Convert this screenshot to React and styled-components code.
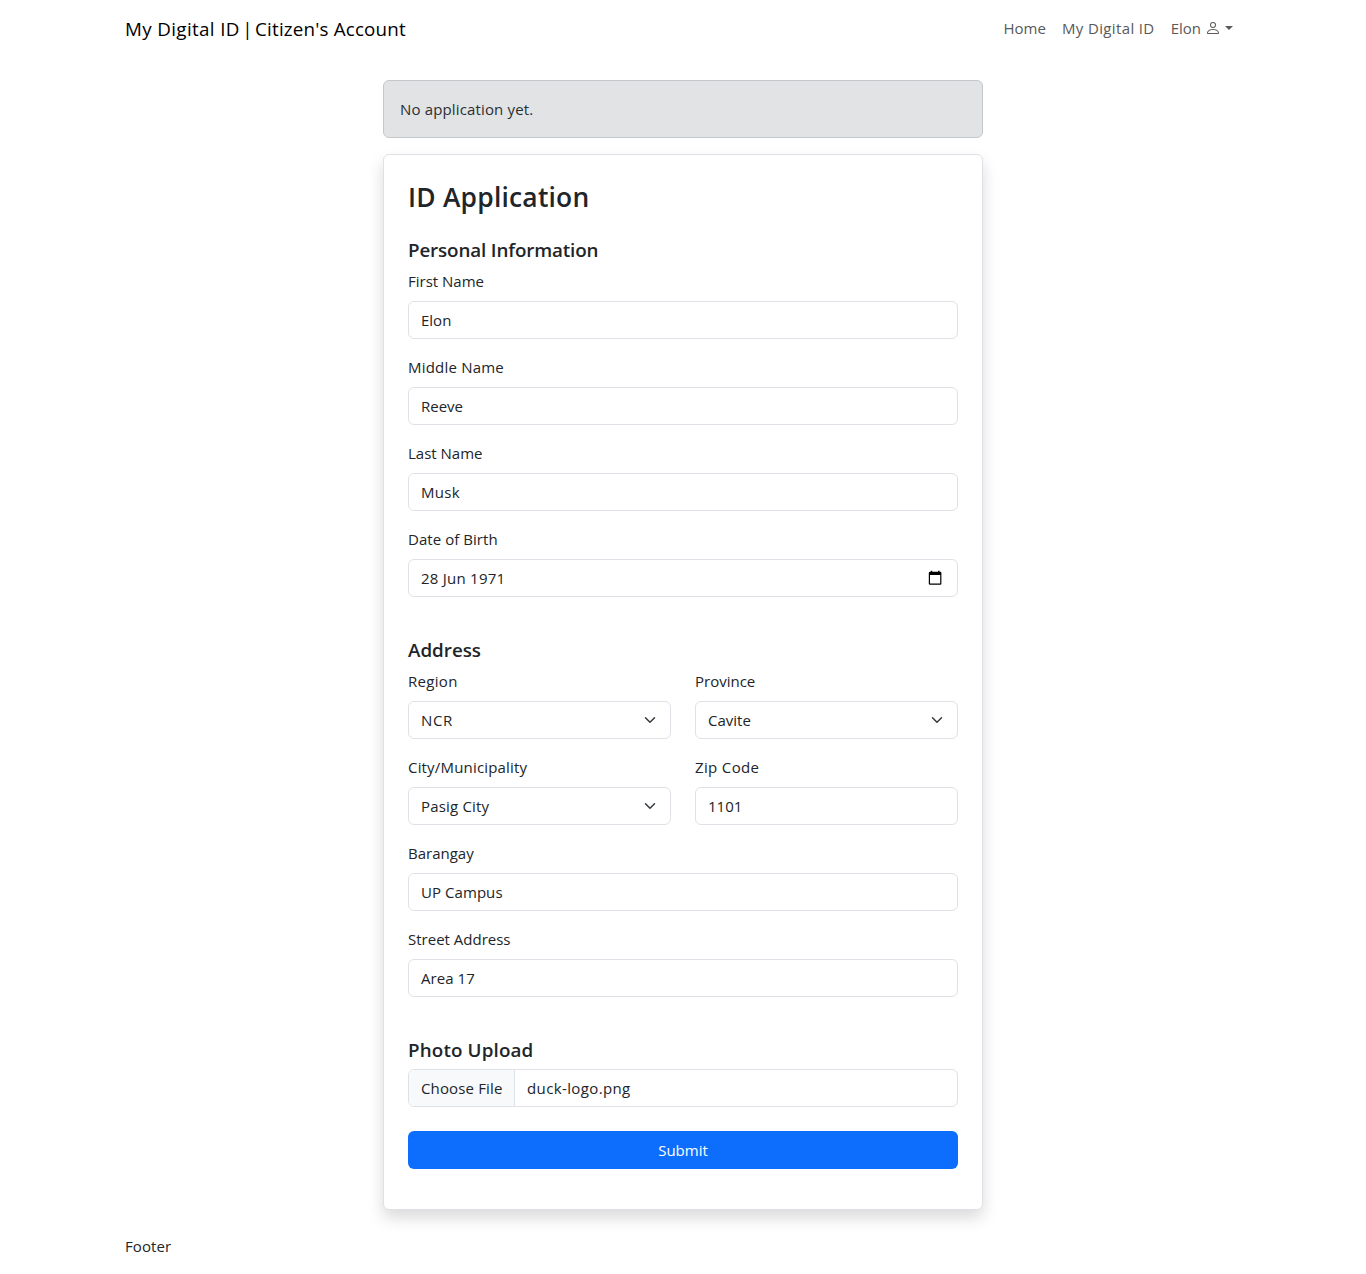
import React from "react";
import styled, { createGlobalStyle } from "styled-components";

const GlobalStyle = createGlobalStyle`
  *, *::before, *::after { box-sizing: border-box; }
  body {
    margin: 0;
    background: #fff;
    color: #212529;
    font-family: "Segoe UI", "Open Sans", "Noto Sans", sans-serif;
    font-size: 15px;
    line-height: 24px;
  }
`;

const Container = styled.div`
  width: 1140px;
  margin: 0 auto;
  padding: 0 12px;
`;

const Navbar = styled(Container).attrs({ as: "nav" })`
  height: 56px;
  display: flex;
  align-items: center;
  justify-content: space-between;
`;

const Brand = styled.a`
  color: #000;
  font-size: 18.8px;
  line-height: 30px;
  padding-top: 2px;
  word-spacing: -2.4px;
`;

const BrandPart = styled.span`
  word-spacing: 0;
  letter-spacing: ${(p) => p.$track || 0}px;
`;

const NavList = styled.div`
  display: flex;
`;

const NavLink = styled.a`
  display: flex;
  align-items: center;
  padding: 8px;
  color: #595959;
  letter-spacing: ${(p) => p.$track || 0}px;
`;

const PersonIcon = styled.svg`
  width: 16px;
  height: 16px;
  margin: 0 4px 0 4px;
`;

const Caret = styled.span`
  border-top: 4.8px solid #595959;
  border-left: 4.8px solid transparent;
  border-right: 4.8px solid transparent;
`;

const Main = styled.main`
  width: 600px;
  margin: 24px auto 0;
`;

const Alert = styled.div`
  height: 58px;
  padding: 16px;
  margin-bottom: 16px;
  border: 1px solid #c4c8cb;
  border-radius: 6px;
  background: #e2e3e5;
  color: #2b2f32;
  letter-spacing: ${(p) => p.$track || 0}px;
`;

const Card = styled.form`
  padding: 24px 24px 40px;
  border: 1px solid #dee2e6;
  border-radius: 6px;
  background: #fff;
  box-shadow: 0 8px 16px rgba(0, 0, 0, 0.15);
`;

const Title = styled.h3`
  margin: 0 0 22px;
  padding-top: 2px;
  font-size: 26.4px;
  line-height: 33.6px;
  font-weight: 600;
  letter-spacing: ${(p) => p.$track || 0}px;
`;

const Section = styled.section`
  margin-bottom: 40px;
  &:last-of-type { margin-bottom: 24px; }
`;

const Heading = styled.h5`
  margin: 0 0 7px;
  padding-top: 1px;
  font-size: 18.8px;
  line-height: 24px;
  font-weight: 600;
  letter-spacing: ${(p) => p.$track || 0}px;
`;

const Fields = styled.div`
  display: grid;
  grid-template-columns: 1fr 1fr;
  gap: 16px 24px;
`;

const Field = styled.div`
  grid-column: ${(p) => (p.$half ? "auto" : "1 / -1")};
`;

const Label = styled.label`
  display: block;
  margin-bottom: 8px;
  letter-spacing: ${(p) => p.$track || 0}px;
`;

const Control = styled.div`
  display: flex;
  align-items: center;
  justify-content: space-between;
  height: 38px;
  padding: 0 12px;
  border: 1px solid #dee2e6;
  border-radius: 6px;
  background: #fff;
`;

const Value = styled.span`
  letter-spacing: ${(p) => p.$track || 0}px;
`;

const Chevron = styled.svg`
  width: 16px;
  height: 12px;
`;

const CalendarIcon = styled.svg`
  width: 15px;
  height: 15px;
  margin-right: 2px;
`;

const FileControl = styled(Control)`
  justify-content: flex-start;
  padding: 0;
  overflow: hidden;
`;

const FileButton = styled.span`
  width: 106px;
  height: 36px;
  padding: 6px 12px;
  border-right: 1px solid #dee2e6;
  background: #f8f9fa;
  white-space: nowrap;
  letter-spacing: ${(p) => p.$track || 0}px;
`;

const FileName = styled(Value)`
  padding-left: 12px;
`;

const Submit = styled.button`
  display: block;
  width: 100%;
  height: 38px;
  border: 0;
  border-radius: 6px;
  background: #0d6efd;
  color: #fff;
  font: inherit;
`;

const Footer = styled(Container).attrs({ as: "footer" })`
  padding-top: 24px;
  padding-bottom: 16px;
  letter-spacing: ${(p) => p.$track || 0}px;
`;

const personal = [
  { label: "First Name", value: "Elon" },
  { label: "Middle Name", labelTrack: 0.2, value: "Reeve" },
  { label: "Last Name", value: "Musk", track: 0.3 },
  { label: "Date of Birth", labelTrack: 0.05, value: "28 Jun 1971", track: 0.25, kind: "date" },
];

const address = [
  { label: "Region", labelTrack: 0.3, value: "NCR", track: 0.6, kind: "select", half: true },
  { label: "Province", value: "Cavite", kind: "select", half: true },
  { label: "City/Municipality", labelTrack: 0.18, value: "Pasig City", track: 0.18, kind: "select", half: true },
  { label: "Zip Code", labelTrack: 0.35, value: "1101", half: true },
  { label: "Barangay", value: "UP Campus", track: 0.06 },
  { label: "Street Address", value: "Area 17", track: 0.06 },
];

function FormField({ label, value, kind, half, labelTrack, track }) {
  return (
    <Field $half={half}>
      <Label $track={labelTrack}>{label}</Label>
      <Control>
        <Value $track={track}>{value}</Value>
        {kind === "select" && (
          <Chevron viewBox="0 0 16 16">
            <path d="m2 5 6 6 6-6" fill="none" stroke="#343a40" strokeWidth="2" strokeLinecap="round" strokeLinejoin="round" />
          </Chevron>
        )}
        {kind === "date" && (
          <CalendarIcon viewBox="0 0 15 15">
            <path d="M2.2 1H3V0h1.4v1h5.9V0h1.4v1h.8q1.1 0 1.1 1.1v10.8q0 1.1-1.1 1.1H2.2Q1 14 1 12.9V2.1Q1 1 2.2 1zM2.2 4.2v8.6h10.2V4.2z" transform="translate(-.2 .8)" fill="#000" fillRule="evenodd" />
          </CalendarIcon>
        )}
      </Control>
    </Field>
  );
}

export default function App() {
  return (
    <>
      <GlobalStyle />
      <Navbar>
        <Brand>
          <BrandPart $track={0.36}>My Digital ID</BrandPart> | <BrandPart $track={0.18}>Citizen's Account</BrandPart>
        </Brand>
        <NavList>
          <NavLink>Home</NavLink>
          <NavLink $track={0.37}>My Digital ID</NavLink>
          <NavLink>
            Elon
            <PersonIcon viewBox="0 0 16 16" fill="#595959">
              <path d="M8 8a3 3 0 1 0 0-6 3 3 0 0 0 0 6m2-3a2 2 0 1 1-4 0 2 2 0 0 1 4 0m4 8c0 1-1 1-1 1H3s-1 0-1-1 1-4 6-4 6 3 6 4m-1-.004c-.001-.246-.154-.986-.832-1.664C11.516 10.68 10.289 10 8 10s-3.516.68-4.168 1.332c-.678.678-.83 1.418-.832 1.664z" />
            </PersonIcon>
            <Caret />
          </NavLink>
        </NavList>
      </Navbar>
      <Main>
        <Alert $track={0.15}>No application yet.</Alert>
        <Card>
          <Title $track={0.22}>ID Application</Title>
          <Section>
            <Heading $track={-0.13}>Personal Information</Heading>
            <Fields>{personal.map((f) => <FormField key={f.label} {...f} />)}</Fields>
          </Section>
          <Section>
            <Heading>Address</Heading>
            <Fields>{address.map((f) => <FormField key={f.label} {...f} />)}</Fields>
          </Section>
          <Section>
            <Heading $track={0.15}>Photo Upload</Heading>
            <FileControl>
              <FileButton $track={0.14}>Choose File</FileButton>
              <FileName $track={0.38}>duck-logo.png</FileName>
            </FileControl>
          </Section>
          <Submit type="button">Submit</Submit>
        </Card>
      </Main>
      <Footer $track={0.1}>Footer</Footer>
    </>
  );
}
